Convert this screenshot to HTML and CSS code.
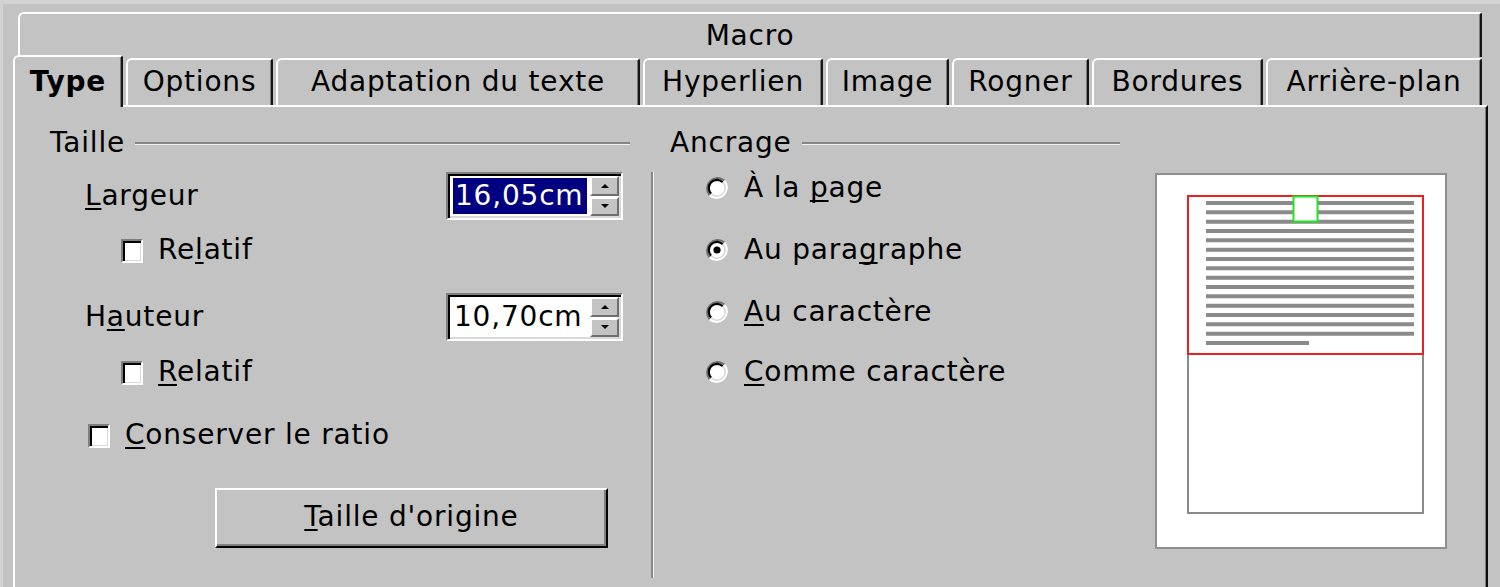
FILE: index.html
```html
<!DOCTYPE html>
<html lang="fr">
<head>
<meta charset="utf-8">
<title>Image</title>
<link rel="stylesheet" href="styles.css">
</head>
<body>
<div class="dialog">
  <div class="tabs">
    <div class="row-back">Macro</div>
    <div class="row-front">
      <div class="tab sel">Type</div>
      <div class="tab">Options</div>
      <div class="tab">Adaptation du texte</div>
      <div class="tab">Hyperlien</div>
      <div class="tab">Image</div>
      <div class="tab">Rogner</div>
      <div class="tab">Bordures</div>
      <div class="tab">Arrière-plan</div>
    </div>
  </div>
  <div class="panel">
    <div class="col-left">
      <div class="group-head"><span>Taille</span><span class="rule"></span></div>
      <div class="field-row r-largeur">
        <span class="lbl"><u>L</u>argeur</span>
        <div class="spin">
          <div class="spin-text"><span class="selected">16,05cm</span></div>
          <div class="spin-btns"><span class="sb up"></span><span class="sb down"></span></div>
        </div>
      </div>
      <div class="check-row r-rel1"><span class="cb"></span><span>Re<u>l</u>atif</span></div>
      <div class="field-row r-hauteur">
        <span class="lbl">H<u>a</u>uteur</span>
        <div class="spin">
          <div class="spin-text"><span class="plain">10,70cm</span></div>
          <div class="spin-btns"><span class="sb up"></span><span class="sb down"></span></div>
        </div>
      </div>
      <div class="check-row r-rel2"><span class="cb"></span><span><u>R</u>elatif</span></div>
      <div class="check-row r-cons"><span class="cb"></span><span><u>C</u>onserver le ratio</span></div>
      <button class="btn" type="button"><u>T</u>aille d'origine</button>
    </div>
    <div class="vsep"></div>
    <div class="col-right">
      <div class="group-head"><span>Ancrage</span><span class="rule"></span></div>
      <div class="radio-row rr1">
        <svg class="radio" width="24" height="24" viewBox="0 0 24 24"><circle cx="12" cy="12" r="10" fill="#fff"/><path d="M4.6 19.4 A10.5 10.5 0 0 1 19.4 4.6" fill="none" stroke="#6e6e6e" stroke-width="2"/><path d="M6.2 17.8 A8.2 8.2 0 0 1 17.8 6.2" fill="none" stroke="#000" stroke-width="2.2"/><path d="M19.4 4.6 A10.5 10.5 0 0 1 4.6 19.4" fill="none" stroke="#fff" stroke-width="2"/><path d="M17.8 6.2 A8.2 8.2 0 0 1 6.2 17.8" fill="none" stroke="#d6d6d6" stroke-width="1.5"/></svg>
        <span>À la <u>p</u>age</span>
      </div>
      <div class="radio-row rr2">
        <svg class="radio" width="24" height="24" viewBox="0 0 24 24"><circle cx="12" cy="12" r="10" fill="#fff"/><path d="M4.6 19.4 A10.5 10.5 0 0 1 19.4 4.6" fill="none" stroke="#6e6e6e" stroke-width="2"/><path d="M6.2 17.8 A8.2 8.2 0 0 1 17.8 6.2" fill="none" stroke="#000" stroke-width="2.2"/><path d="M19.4 4.6 A10.5 10.5 0 0 1 4.6 19.4" fill="none" stroke="#fff" stroke-width="2"/><path d="M17.8 6.2 A8.2 8.2 0 0 1 6.2 17.8" fill="none" stroke="#d6d6d6" stroke-width="1.5"/><circle cx="12" cy="12" r="3.6" fill="#000"/></svg>
        <span>Au para<u>g</u>raphe</span>
      </div>
      <div class="radio-row rr3">
        <svg class="radio" width="24" height="24" viewBox="0 0 24 24"><circle cx="12" cy="12" r="10" fill="#fff"/><path d="M4.6 19.4 A10.5 10.5 0 0 1 19.4 4.6" fill="none" stroke="#6e6e6e" stroke-width="2"/><path d="M6.2 17.8 A8.2 8.2 0 0 1 17.8 6.2" fill="none" stroke="#000" stroke-width="2.2"/><path d="M19.4 4.6 A10.5 10.5 0 0 1 4.6 19.4" fill="none" stroke="#fff" stroke-width="2"/><path d="M17.8 6.2 A8.2 8.2 0 0 1 6.2 17.8" fill="none" stroke="#d6d6d6" stroke-width="1.5"/></svg>
        <span><u>A</u>u caractère</span>
      </div>
      <div class="radio-row rr4">
        <svg class="radio" width="24" height="24" viewBox="0 0 24 24"><circle cx="12" cy="12" r="10" fill="#fff"/><path d="M4.6 19.4 A10.5 10.5 0 0 1 19.4 4.6" fill="none" stroke="#6e6e6e" stroke-width="2"/><path d="M6.2 17.8 A8.2 8.2 0 0 1 17.8 6.2" fill="none" stroke="#000" stroke-width="2.2"/><path d="M19.4 4.6 A10.5 10.5 0 0 1 4.6 19.4" fill="none" stroke="#fff" stroke-width="2"/><path d="M17.8 6.2 A8.2 8.2 0 0 1 6.2 17.8" fill="none" stroke="#d6d6d6" stroke-width="1.5"/></svg>
        <span><u>C</u>omme caractère</span>
      </div>
    </div>
    <div class="preview">
      <svg width="292" height="376" viewBox="0 0 292 376">
        <rect x="1" y="1" width="290" height="374" fill="#fff" stroke="#8f8f8f" stroke-width="2"/>
        <rect x="33" y="23" width="235" height="317" fill="#fff" stroke="#8a8a8a" stroke-width="2"/>
        <g stroke="#8a8a8a" stroke-width="4">
          <line x1="51" y1="30" x2="259" y2="30"/>
          <line x1="51" y1="39.3" x2="259" y2="39.3"/>
          <line x1="51" y1="48.7" x2="259" y2="48.7"/>
          <line x1="51" y1="58" x2="259" y2="58"/>
          <line x1="51" y1="67.3" x2="259" y2="67.3"/>
          <line x1="51" y1="76.7" x2="259" y2="76.7"/>
          <line x1="51" y1="86" x2="259" y2="86"/>
          <line x1="51" y1="95.3" x2="259" y2="95.3"/>
          <line x1="51" y1="104.7" x2="259" y2="104.7"/>
          <line x1="51" y1="114" x2="259" y2="114"/>
          <line x1="51" y1="123.3" x2="259" y2="123.3"/>
          <line x1="51" y1="132.7" x2="259" y2="132.7"/>
          <line x1="51" y1="142" x2="259" y2="142"/>
          <line x1="51" y1="151.3" x2="259" y2="151.3"/>
          <line x1="51" y1="160.7" x2="259" y2="160.7"/>
          <line x1="51" y1="170" x2="154" y2="170"/>
        </g>
        <rect x="33" y="23" width="235" height="158" fill="none" stroke="#f01e1e" stroke-width="2"/>
        <rect x="138.5" y="23.5" width="24" height="25" fill="#fff" stroke="#1ee61e" stroke-width="2"/>
      </svg>
    </div>
  </div>
</div>
</body>
</html>
```

FILE: styles.css
```css
html, body {
  margin: 0;
  padding: 0;
}

body {
  background: #c3c3c3;
  font-family: "DejaVu Sans", "Liberation Sans", sans-serif;
  font-size: 28px;
  letter-spacing: 0.8px;
  color: #000;
  overflow: hidden;
  width: 1500px;
  height: 587px;
}

u {
  text-decoration-thickness: 2px;
  text-underline-offset: 3px;
  text-decoration-skip-ink: none;
}

.dialog {
  border-top: 4px solid #d2d2d2;
  border-left: 3px solid #d2d2d2;
  height: 583px;
  overflow: hidden;
}

.tabs {
  padding-left: 10px;
}

.row-back {
  margin: 8px 0 0 5px;
  width: 1464px;
  height: 45px;
  box-sizing: border-box;
  border-top: 2px solid #fff;
  border-left: 2px solid #fff;
  border-right: 2px solid #151515;
  border-top-left-radius: 6px;
  border-top-right-radius: 3px;
  box-shadow: inset -1px 0 0 #7a7a7a;
  padding-top: 6px;
  line-height: 32px;
  text-align: center;
}

.row-front {
  display: grid;
  grid-template-columns: 110px 147px 364px 180px 123px 137px 171px 216px;
  grid-template-rows: 48px;
  column-gap: 3px;
}

.tab {
  align-self: end;
  height: 47px;
  box-sizing: border-box;
  border-top: 2px solid #fff;
  border-left: 2px solid #fff;
  border-right: 2px solid #151515;
  border-top-left-radius: 6px;
  border-top-right-radius: 3px;
  box-shadow: inset -1px 0 0 #7a7a7a;
  padding-top: 6px;
  line-height: 32px;
  text-align: center;
  white-space: nowrap;
  background: #c3c3c3;
}

.tab.sel {
  align-self: stretch;
  height: auto;
  margin: -2px 0 -2px 0;
  padding-top: 9px;
  font-weight: bold;
  position: relative;
  z-index: 1;
}

.panel {
  margin-left: 10px;
  width: 1475px;
  height: 500px;
  box-sizing: border-box;
  border-top: 2px solid #fff;
  border-left: 2px solid #fff;
  border-right: 2px solid #0d0d0d;
  box-shadow: inset -1px 0 0 #7a7a7a;
  display: flex;
  align-items: flex-start;
  padding-top: 20px;
}

.col-left {
  margin-left: 35px;
  width: 580px;
  display: flex;
  flex-direction: column;
  align-items: flex-start;
}

.group-head {
  display: flex;
  align-items: center;
  height: 32px;
  line-height: 32px;
  width: 100%;
}

.group-head .rule {
  flex: 1;
  margin-left: 10px;
  height: 0;
  border-top: 2px solid #878787;
  border-bottom: 1px solid #f2f2f2;
}

.field-row {
  display: flex;
  align-items: center;
  justify-content: space-between;
  box-sizing: border-box;
  width: 573px;
  height: 48px;
  padding-left: 35px;
  line-height: 32px;
}

.r-largeur { margin-top: 13px; }
.r-hauteur { margin-top: 27px; }

.spin {
  width: 177px;
  height: 48px;
  box-sizing: border-box;
  border: 2px solid;
  border-color: #808080 #fff #fff #808080;
  box-shadow: inset 2px 2px 0 #000, inset -2px -2px 0 #d9d9d9;
  background: #fff;
  padding: 2px;
  display: flex;
}

.spin-text {
  flex: 1;
  display: flex;
  align-items: center;
  padding-left: 3px;
}

.spin-text .selected {
  background: #000080;
  color: #fff;
  line-height: 36px;
  padding: 0 4px 0 2px;
}

.spin-text .plain {
  line-height: 36px;
  padding-left: 1px;
}

.spin-btns {
  width: 29px;
  display: flex;
  flex-direction: column;
  gap: 1px;
}

.sb {
  flex: 1;
  box-sizing: border-box;
  background: #c3c3c3;
  border: 2px solid;
  border-color: #fff #6f6f6f #6f6f6f #fff;
  display: flex;
  align-items: center;
  justify-content: center;
}

.sb::after {
  content: "";
  width: 0;
  height: 0;
  border-left: 4px solid transparent;
  border-right: 4px solid transparent;
}

.sb.up::after {
  border-bottom: 4px solid #000;
}

.sb.down::after {
  border-top: 4px solid #000;
}

.check-row {
  display: flex;
  align-items: center;
  height: 32px;
  line-height: 32px;
  white-space: nowrap;
}

.cb {
  width: 22px;
  height: 24px;
  box-sizing: border-box;
  margin-top: 2px;
  margin-right: 15px;
  background: #fff;
  border: 2px solid;
  border-color: #7f7f7f #fff #fff #7f7f7f;
  box-shadow: inset 2px 2px 0 #000, inset -1px -1px 0 #d9d9d9;
}

.r-rel1 { margin-top: 14px; padding-left: 120px; }
.r-rel2 { margin-top: 15px; padding-left: 120px; }
.r-cons { margin-top: 31px; padding-left: 38px; }

.r-rel1, .r-rel2 { padding-left: 71px; }

.btn {
  margin-top: 37px;
  margin-left: 165px;
  width: 393px;
  height: 60px;
  box-sizing: border-box;
  background: #c3c3c3;
  border: 2px solid;
  border-color: #fff #000 #000 #fff;
  box-shadow: inset -2px -2px 0 #808080;
  font: inherit;
  letter-spacing: inherit;
  color: #000;
  line-height: 32px;
  padding: 0 0 2px 0;
  text-align: center;
}

.vsep {
  margin-left: 21px;
  margin-top: 45px;
  height: 406px;
  border-left: 2px solid #888;
  border-right: 1px solid #f2f2f2;
}

.col-right {
  margin-left: 16px;
  width: 450px;
}

.radio-row {
  display: flex;
  align-items: center;
  height: 32px;
  line-height: 32px;
  padding-left: 35px;
  white-space: nowrap;
}

.radio {
  margin-right: 15px;
  flex: none;
}

.rr1 { margin-top: 13px; }
.rr2 { margin-top: 30px; }
.rr3 { margin-top: 30px; }
.rr4 { margin-top: 28px; }

.preview {
  margin-left: 35px;
  margin-top: 46px;
  width: 292px;
  height: 376px;
}

.preview svg {
  display: block;
}
```
